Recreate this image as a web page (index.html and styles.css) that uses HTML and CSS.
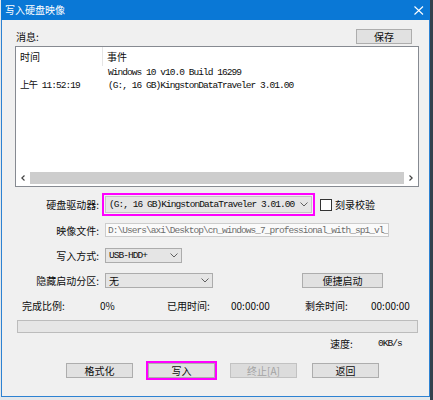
FILE: index.html
```html
<!DOCTYPE html>
<html lang="zh-CN">
<head>
<meta charset="utf-8">
<title>写入硬盘映像</title>
<link rel="stylesheet" href="styles.css">
</head>
<body>
<div class="window">
  <div class="titlebar">
    <span class="title">写入硬盘映像</span>
    <svg class="close" width="10" height="9" viewBox="0 0 10 9"><path d="M0.5 0.5 L9 8.5 M9 0.5 L0.5 8.5" stroke="#fff" stroke-width="1.1" fill="none"/></svg>
  </div>
  <div class="client">
    <div class="msg-head">
      <span class="label">消息:</span>
      <button class="btn save">保存</button>
    </div>
    <div class="list">
      <div class="list-head">
        <div class="c1 hcell">时间</div>
        <div class="c2 hcell">事件</div>
      </div>
      <div class="list-row">
        <div class="c1"></div>
        <div class="c2 mono">Windows 10 v10.0 Build 16299</div>
      </div>
      <div class="list-row">
        <div class="c1 mono">上午 11:52:19</div>
        <div class="c2 mono">(G:, 16 GB)KingstonDataTraveler 3.01.00</div>
      </div>
      <div class="spacer"></div>
      <div class="hscroll">
        <span class="sarrow"><svg width="4" height="6" viewBox="0 0 4 6"><path d="M3.5 0.5 L0.8 3 L3.5 5.5" stroke="#444" stroke-width="1.2" fill="none"/></svg></span>
        <div class="thumb"></div>
        <span class="sarrow"><svg width="4" height="6" viewBox="0 0 4 6"><path d="M0.5 0.5 L3.2 3 L0.5 5.5" stroke="#444" stroke-width="1.2" fill="none"/></svg></span>
      </div>
    </div>

    <div class="frow r-drive">
      <span class="flabel">硬盘驱动器:</span>
      <div class="combo drive highlight">
        <span class="mono">(G:, 16 GB)KingstonDataTraveler 3.01.00</span>
        <svg class="chev" width="8" height="5" viewBox="0 0 8 5"><path d="M0.5 0.5 L4 4 L7.5 0.5" stroke="#606060" stroke-width="1" fill="none"/></svg>
      </div>
      <span class="check"></span>
      <span class="checklabel">刻录校验</span>
    </div>

    <div class="frow r-image">
      <span class="flabel">映像文件:</span>
      <div class="textbox"><span class="mono">D:\Users\axi\Desktop\cn_windows_7_professional_with_sp1_vl_</span></div>
    </div>

    <div class="frow r-mode">
      <span class="flabel">写入方式:</span>
      <div class="combo mode">
        <span class="mono">USB-HDD+</span>
        <svg class="chev" width="8" height="5" viewBox="0 0 8 5"><path d="M0.5 0.5 L4 4 L7.5 0.5" stroke="#606060" stroke-width="1" fill="none"/></svg>
      </div>
    </div>

    <div class="frow r-hide">
      <span class="flabel">隐藏启动分区:</span>
      <div class="combo hide">
        <span class="cjk">无</span>
        <svg class="chev" width="8" height="5" viewBox="0 0 8 5"><path d="M0.5 0.5 L4 4 L7.5 0.5" stroke="#606060" stroke-width="1" fill="none"/></svg>
      </div>
      <button class="btn quick">便捷启动</button>
    </div>

    <div class="progress-info">
      <span>完成比例:</span>
      <span>0%</span>
      <span>已用时间:</span>
      <span>00:00:00</span>
      <span>剩余时间:</span>
      <span>00:00:00</span>
    </div>

    <div class="progress"></div>

    <div class="speed">
      <span class="speed-label">速度:</span>
      <span class="mono">0KB/s</span>
    </div>

    <div class="actions">
      <button class="btn act">格式化</button>
      <button class="btn act highlight">写入</button>
      <button class="btn act disabled">终止[A]</button>
      <button class="btn act">返回</button>
    </div>
  </div>
</div>
</body>
</html>
```

FILE: styles.css
```css
html {
  background: linear-gradient(to right, #e4e7ea 0, #e4e7ea 430px, #34404c 430px);
}
body {
  margin: 0;
  font-family: "Noto Sans CJK SC", "Microsoft YaHei", sans-serif;
  font-size: 10px;
  color: #0d0d0d;
}
.window {
  margin-left: 1px;
  width: 429px;
  height: 397px;
  box-sizing: border-box;
  background: #f0f0f0;
  border: 1px solid #2d82d2;
  border-top: 0;
}
.titlebar {
  height: 20px;
  margin: 0 -1px;
  background: #0a78d6;
  display: flex;
  align-items: center;
  justify-content: space-between;
  padding: 0 6px 0 4px;
}
.title {
  color: #fff;
  font-size: 10px;
  line-height: 20px;
}
.close {
  display: block;
  margin-top: 1px;
}
.client {
  padding: 0 10px 0 13px;
}
.mono {
  font-family: "Liberation Mono", "Noto Sans CJK SC", monospace;
  font-size: 9.5px;
  letter-spacing: -0.95px;
  white-space: nowrap;
}
.cjk {
  font-size: 10px;
}
.msg-head {
  margin-top: 9px;
  height: 15px;
  display: flex;
  align-items: center;
  justify-content: space-between;
}
.label {
  margin-left: 1px;
}
.btn {
  font-family: "Noto Sans CJK SC", sans-serif;
  font-size: 10px;
  color: #0d0d0d;
  background: #e1e1e1;
  border: 1px solid #adadad;
  padding: 0;
  height: 15px;
  line-height: 13px;
  box-sizing: border-box;
}
.save {
  width: 56px;
  margin-right: 7px;
}
.list {
  margin-top: 2px;
  height: 141px;
  box-sizing: border-box;
  border: 1px solid #868a91;
  background: #fff;
  display: flex;
  flex-direction: column;
}
.list-head {
  height: 19px;
  display: flex;
  align-items: stretch;
}
.hcell {
  line-height: 19px;
}
.list-head .c1 {
  border-right: 1px solid #e5e5e5;
}
.c1 {
  width: 82px;
  padding-left: 4px;
  white-space: nowrap;
}
.c2 {
  padding-left: 4px;
}
.list-row {
  display: flex;
  height: 12px;
  line-height: 12px;
  margin-top: 1px;
}
.list-row .c2 {
  padding-left: 6px;
}
.spacer {
  flex: 1;
}
.hscroll {
  height: 12px;
  margin-bottom: 2px;
  display: flex;
  align-items: stretch;
}
.sarrow {
  width: 14px;
  display: flex;
  align-items: center;
  justify-content: center;
}
.thumb {
  flex: 1;
  background: #cdcdcd;
}
.frow {
  display: flex;
  align-items: center;
}
.flabel {
  width: 84px;
  text-align: right;
  white-space: nowrap;
  margin-right: 6px;
}
.r-drive {
  margin-top: 9px;
  height: 17px;
}
.r-image {
  margin-top: 10px;
  height: 14px;
}
.r-mode {
  margin-top: 11px;
  height: 15px;
}
.r-hide {
  margin-top: 10px;
  height: 15px;
}
.combo {
  height: 100%;
  box-sizing: border-box;
  background: #e5e5e5;
  border: 1px solid #acacac;
  display: flex;
  align-items: center;
  justify-content: space-between;
  padding: 0 3px 0 3px;
  overflow: hidden;
}
.drive {
  width: 207px;
  border-color: #c4c4c4;
}
.highlight {
  outline: 2px solid #ff00ff;
  outline-offset: 1px;
}
.mode {
  width: 77px;
}
.hide {
  width: 108px;
}
.chev {
  flex: none;
  display: block;
}
.check {
  width: 12px;
  height: 12px;
  box-sizing: border-box;
  border: 1px solid #333;
  background: #fff;
  margin-left: 8px;
}
.checklabel {
  margin-left: 3px;
}
.textbox {
  width: 284px;
  height: 100%;
  box-sizing: border-box;
  border: 1px solid #cccccc;
  background: #fafafa;
  color: #6d6d6d;
  display: flex;
  align-items: center;
  padding-left: 2px;
  overflow: hidden;
}
.quick {
  width: 81px;
  margin-left: 89px;
}
.progress-info {
  margin-top: 11px;
  margin-left: 7px;
  height: 14px;
  line-height: 14px;
  display: grid;
  grid-template-columns: 78px 67px 64px 74px 66px auto;
  white-space: nowrap;
}
.progress {
  margin: 7px 1px 0 2px;
  height: 13px;
  box-sizing: border-box;
  background: #e6e6e6;
  border: 1px solid #bcbcbc;
}
.speed {
  margin-top: 4px;
  margin-left: 315px;
  height: 14px;
  line-height: 14px;
  display: flex;
}
.speed-label {
  width: 48px;
}
.actions {
  margin-top: 12px;
  margin-left: 51px;
  display: flex;
  gap: 15px;
}
.act {
  width: 67px;
}
.act.highlight {
  outline-offset: 0;
}
.disabled {
  color: #a3a3a3;
  background: #dcdcdc;
  border-color: #c2c2c2;
}
```
